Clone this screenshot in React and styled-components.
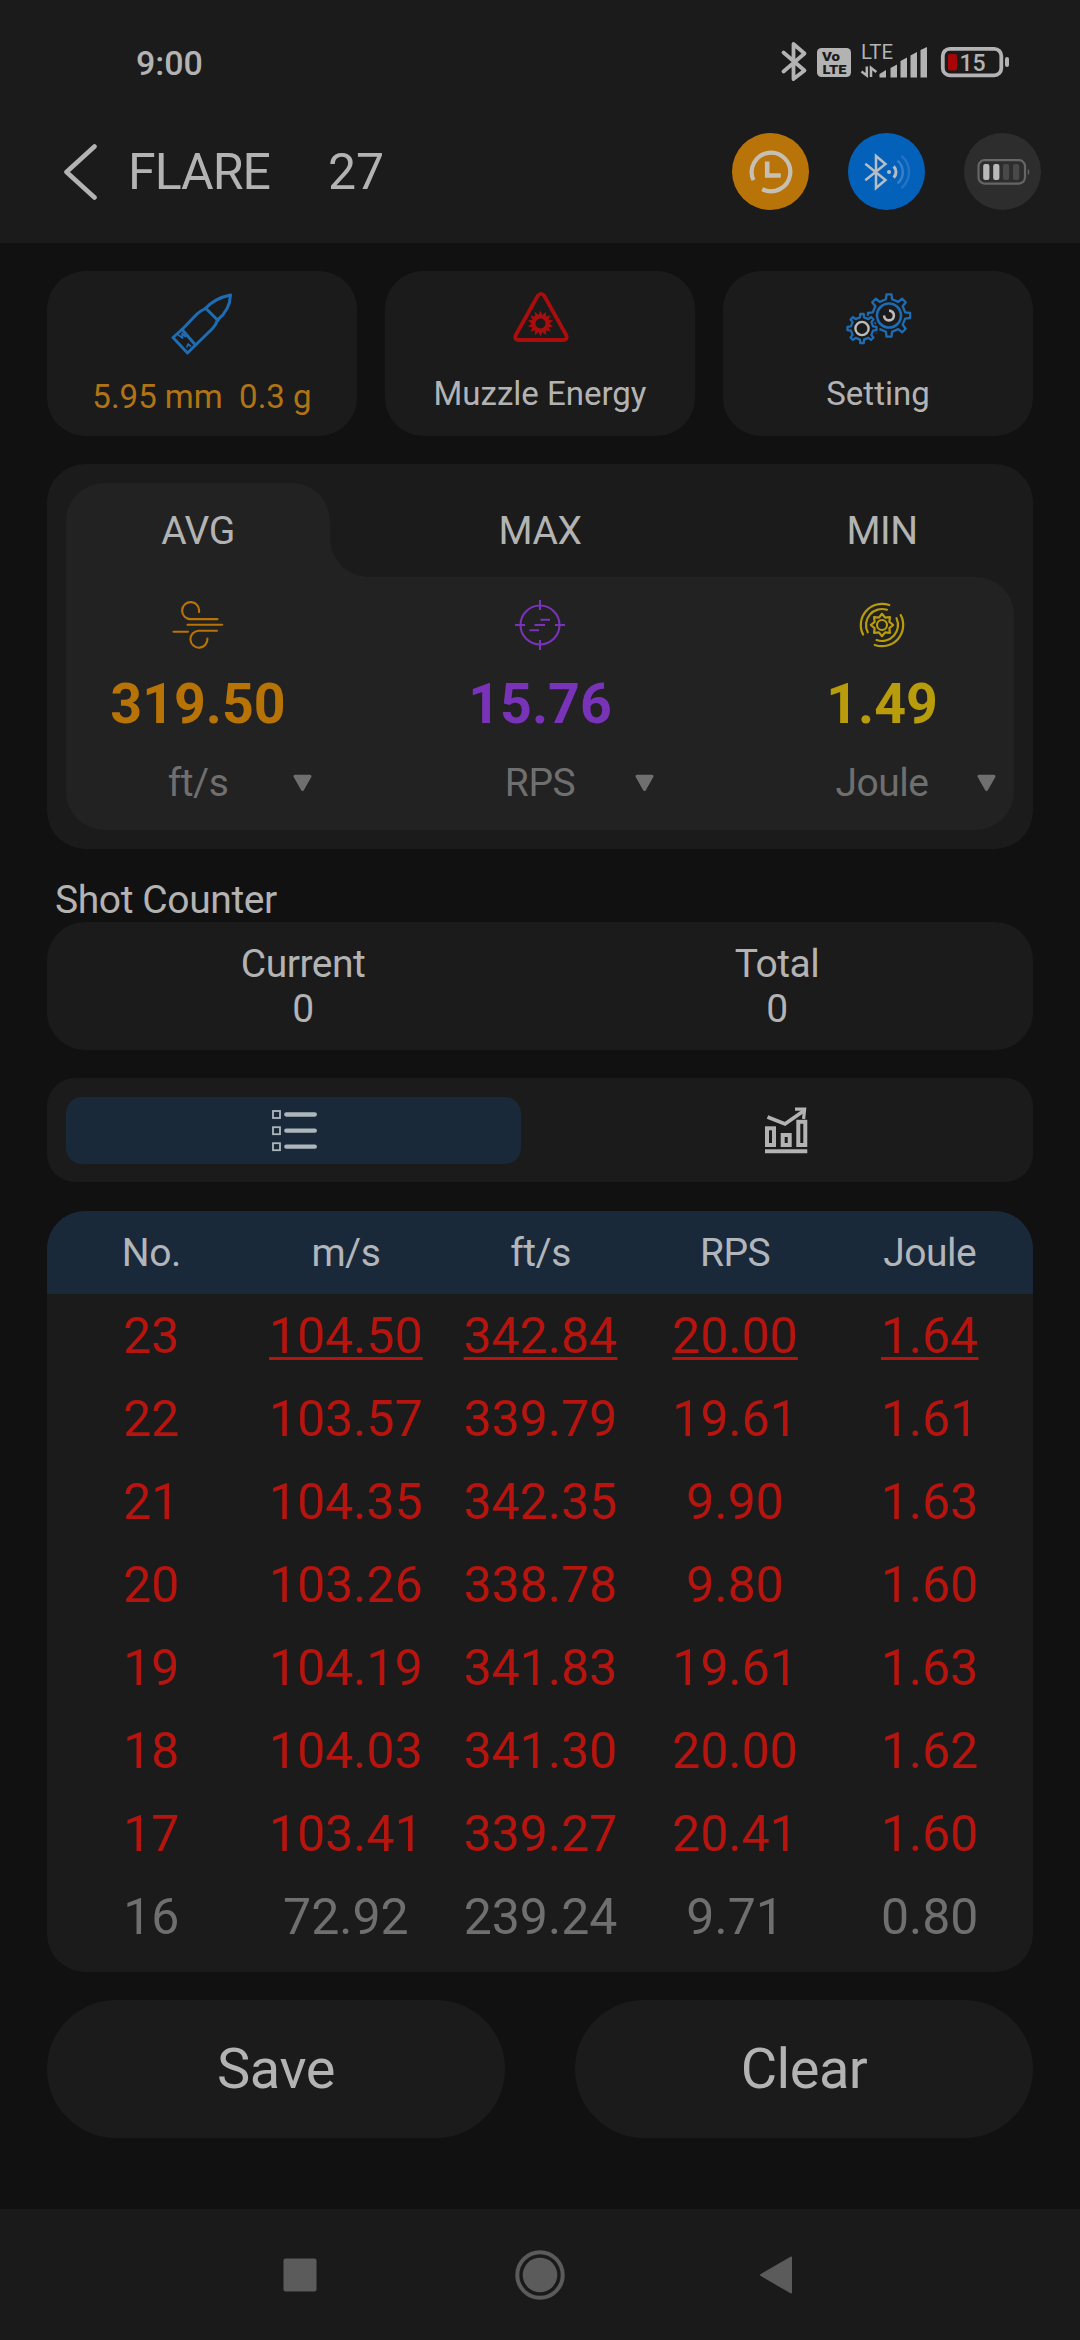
import React from 'react';

import styled, { createGlobalStyle } from "styled-components";

const GlobalStyle = createGlobalStyle`
    * {
        box-sizing: border-box;
    }
    body {
        margin: 0;
        background: #111111;
        font-family: Roboto, "Liberation Sans", sans-serif;
        color: #b3b3b3;
    }
    svg {
        display: block;
        flex: none;
    }
`;

const Screen = styled.div`
    width: 1080px;
    height: 2340px;
    display: flex;
    flex-direction: column;
    overflow: hidden;
`;

const TopArea = styled.header`
    height: 243px;
    background: #1b1b1b;
`;

const StatusBar = styled.div`
    height: 124px;
    padding: 0 70px 0 136px;
    display: flex;
    align-items: center;
`;

const Clock = styled.span`
    font-size: 34px;
    font-weight: 500;
    line-height: 40px;
    margin-right: auto;
    padding-top: 2px;
`;

const Toolbar = styled.div`
    height: 95px;
    padding: 0 39px 0 64px;
    display: flex;
    align-items: center;
`;

const Title = styled.h1`
    margin: 0 0 0 ${props => props.$gap}px;
    font-size: 50px;
    font-weight: 400;
    line-height: 60px;
    letter-spacing: ${props => props.$tracking || 0}px;
`;

const RoundButtons = styled.div`
    display: flex;
    gap: 39px;
    margin-left: auto;
`;

const RoundButton = styled.div`
    width: 77px;
    height: 77px;
    border-radius: 50%;
    background: ${props => props.$bg};
    display: flex;
    align-items: center;
    justify-content: center;
`;

const Content = styled.main`
    flex: 1;
    padding: 28px 47px 0;
    display: flex;
    flex-direction: column;
`;

const CardRow = styled.div`
    display: grid;
    grid-template-columns: repeat(3, 1fr);
    gap: 28px;
`;

const Card = styled.div`
    height: 165px;
    padding-top: ${props => props.$top}px;
    border-radius: 38px;
    background: #1b1b1b;
    display: flex;
    flex-direction: column;
    align-items: center;
`;

const CardLabel = styled.span`
    margin-top: auto;
    margin-bottom: ${props => props.$bottom || 22}px;
    font-size: 33px;
    line-height: 40px;
    white-space: pre;
    color: ${props => props.$color || "#b3b3b3"};
`;

const StatsPanel = styled.section`
    height: 385px;
    margin-top: 28px;
    padding: 19px;
    border-radius: 38px;
    background: #1b1b1b;
`;

const Tabs = styled.div`
    display: flex;
    justify-content: space-between;
`;

const Tab = styled.div`
    position: relative;
    width: 264px;
    height: 94px;
    font-size: 39px;
    line-height: 96px;
    letter-spacing: -0.5px;
    text-align: center;
    border-radius: 38px 38px 0 0;
    background: ${props => (props.$active ? "#222222" : "none")};

    /* inverted corner that joins the tab to the body */
    &::after {
        content: "";
        display: ${props => (props.$active ? "block" : "none")};
        position: absolute;
        left: 100%;
        bottom: 0;
        width: 38px;
        height: 38px;
        background: radial-gradient(circle at 100% 0, transparent 37.5px, #222222 38px);
    }
`;

const StatsBody = styled.div`
    height: 253px;
    padding-top: 17px;
    border-radius: 0 38px 38px 38px;
    background: #222222;
    display: flex;
    justify-content: space-between;
`;

const Stat = styled.div`
    width: 264px;
    display: flex;
    flex-direction: column;
    align-items: center;
`;

const IconBox = styled.div`
    height: 61px;
    display: flex;
    align-items: center;
    justify-content: center;
`;

const StatValue = styled.div`
    margin-top: 18px;
    font-size: 55.5px;
    font-weight: 700;
    line-height: 64px;
    color: ${props => props.$color};
`;

const UnitSelect = styled.div`
    width: 100%;
    margin-top: 22px;
    display: grid;
    align-items: center;
    font-size: 39px;
    line-height: 48px;
    letter-spacing: -0.5px;
    color: #6f6f70;

    > * {
        grid-area: 1 / 1;
    }
    span {
        text-align: center;
    }
    svg {
        justify-self: end;
        margin-right: 18px;
    }
`;

const SectionTitle = styled.h2`
    margin: 27px 0 0 8px;
    height: 46px;
    font-size: 39px;
    font-weight: 400;
    line-height: 49px;
    letter-spacing: -0.4px;
`;

const CounterPanel = styled.section`
    height: 128px;
    padding: 20px 19px 18px;
    border-radius: 38px;
    background: #1b1b1b;
    display: grid;
    grid-template-columns: 1fr 1fr;
    font-size: 39px;
    line-height: 45px;
    letter-spacing: -0.5px;
    text-align: center;
`;

const ViewSwitch = styled.div`
    height: 104px;
    margin-top: 28px;
    padding: 19px 19px 18px;
    border-radius: 28px;
    background: #1b1b1b;
    display: grid;
    grid-template-columns: 1fr 1fr;
    gap: 38px;
`;

const ViewButton = styled.div`
    border-radius: 16px;
    background: ${props => (props.$active ? "#1a293a" : "none")};
    display: flex;
    align-items: center;
    justify-content: center;
`;

const Table = styled.section`
    height: 761px;
    margin-top: 29px;
    border-radius: 38px;
    background: #1b1b1b;
    overflow: hidden;
`;

const TableRow = styled.div`
    height: 83px;
    padding: 0 6px 0 7px;
    display: grid;
    grid-template-columns: repeat(5, 1fr);
    text-align: center;
    font-size: 50px;
    line-height: 85px;
    color: ${props => (props.$muted ? "#6f6f70" : "#b6140f")};
`;

const TableHead = styled(TableRow)`
    font-size: 39px;
    letter-spacing: -0.5px;
    background: #1a293a;
    color: #b2b6bb;
`;

const Cell = styled.span`
    text-decoration: ${props => (props.$underline ? "underline" : "none")};
    text-decoration-thickness: 3px;
    text-underline-offset: 4px;
    text-decoration-skip-ink: none;
`;

const Actions = styled.div`
    margin-top: 28px;
    display: grid;
    grid-template-columns: 1fr 1fr;
    gap: 70px;
`;

const ActionButton = styled.button`
    height: 138px;
    padding: 0;
    border: 0;
    border-radius: 69px;
    background: #1b1b1b;
    color: #b3b3b3;
    font-family: inherit;
    font-size: 56px;
    line-height: 138px;
    letter-spacing: -0.5px;
`;

const NavBar = styled.nav`
    height: 131px;
    padding: 1px 287px 0 283px;
    background: #1a1a1a;
    display: flex;
    align-items: center;
    justify-content: space-between;
`;

const HomeIcon = styled.svg`
    margin-left: 4px;
`;

const GREY = "#b3b3b3";
const BLUE = "#1d6cb4";
const ORANGE = "#b87307";
const PURPLE = "#7833b8";
const YELLOW = "#b89c0c";

function polar(cx, cy, r, deg) {
    const a = (deg * Math.PI) / 180;
    return (cx + r * Math.cos(a)).toFixed(2) + " " + (cy + r * Math.sin(a)).toFixed(2);
}

// clockwise arc between two angles
function arc(cx, cy, r, from, to) {
    const large = to - from > 180 ? 1 : 0;
    return `M${polar(cx, cy, r, from)}A${r} ${r} 0 ${large} 1 ${polar(cx, cy, r, to)}`;
}

function star(cx, cy, outer, inner, points) {
    const list = [];
    for (let i = 0; i < points * 2; i++) {
        list.push(polar(cx, cy, i % 2 ? inner : outer, -90 + (i * 180) / points));
    }
    return "M" + list.join("L") + "Z";
}

function gear(cx, cy, outer, root, teeth) {
    const step = 360 / teeth;
    const list = [];
    for (let i = 0; i < teeth; i++) {
        const a = -90 + i * step;
        list.push(polar(cx, cy, root, a - step * 0.24));
        list.push(polar(cx, cy, outer, a - step * 0.15));
        list.push(polar(cx, cy, outer, a + step * 0.15));
        list.push(polar(cx, cy, root, a + step * 0.24));
    }
    return "M" + list.join("L") + "Z";
}

function StatusIcons() {
    return (
        <svg width="230" height="44" viewBox="780 40 230 44" fill={GREY} fontFamily="Roboto, sans-serif">
            <path d="M783.5 52.5L804.5 70.5L793.5 79V44L804.5 53.5L783.5 71.5" fill="none" stroke={GREY} strokeWidth="3.8" strokeLinejoin="round" strokeLinecap="round" />
            <rect x="817" y="48" width="34" height="29" rx="4.5" />
            <text x="822" y="60.8" fontSize="12.5" fontWeight="900" fill="#1b1b1b" textLength="18" lengthAdjust="spacingAndGlyphs">Vo</text>
            <text x="822.5" y="73.5" fontSize="12.8" fontWeight="900" fill="#1b1b1b" textLength="24" lengthAdjust="spacingAndGlyphs">LTE</text>
            <text x="861" y="59.3" fontSize="20" textLength="32" lengthAdjust="spacingAndGlyphs">LTE</text>
            <path d="M861.5 71.5L866.8 75.5V66.5M871 77V67.8L876.3 72" fill="none" stroke={GREY} strokeWidth="2.5" />
            <path d="M879.5 77.5V74L886 70V77.5ZM890.5 77.5V68L897 64.5V77.5ZM900.5 77.5V61L907 57.5V77.5ZM910.5 77.5V55.5L917 52V77.5ZM920.5 77.5V50L927 47V77.5Z" />
            <rect x="942.8" y="48.8" width="58.5" height="26.5" rx="7" fill="none" stroke={GREY} strokeWidth="3.8" />
            <rect x="1005" y="57" width="4" height="10" rx="2" />
            <rect x="948" y="54" width="9" height="16.5" rx="2" fill="#a80606" />
            <text x="959.5" y="71" fontSize="23" fontWeight="500" textLength="26">15</text>
        </svg>
    );
}

function BackIcon() {
    return (
        <svg width="34" height="56" viewBox="0 0 34 56" fill="none" stroke={GREY} strokeWidth="4.6" strokeLinecap="round" strokeLinejoin="round">
            <path d="M30.5 2.5L2.5 28L30.5 53.5" />
        </svg>
    );
}

function TimerIcon() {
    return (
        <svg width="50" height="50" viewBox="-25 -25 50 50" fill="none" stroke="#c6c0b4" strokeWidth="4.2">
            <path d={arc(0, 0, 19.3, 155, 477)} />
            <path d="M-3.8 -10.5V3.5H9.8" strokeWidth="4.6" />
        </svg>
    );
}

function BluetoothIcon() {
    return (
        <svg width="56" height="50" viewBox="-28 -25 56 50" fill="none" stroke="#b7bdc4" strokeWidth="2.5">
            <path d="M-21.7 -8.3L-1.5 8L-11 16V-16L-1.5 -8L-21.7 8.3" />
            <circle cx="2" cy="0" r="2" fill="#b7bdc4" stroke="none" />
            <path d={arc(1, 0, 8, -45, 45)} strokeWidth="3" />
            <path d={arc(1, 0, 14.8, -50, 50)} stroke="#3580c8" />
            <path d={arc(1, 0, 21, -50, 50)} stroke="#2573c4" />
        </svg>
    );
}

function BatteryIcon() {
    return (
        <svg width="56" height="50" viewBox="-28 -25 56 50">
            <rect x="-24.5" y="-11.8" width="46.5" height="23.4" rx="6" fill="none" stroke="#666666" strokeWidth="2.2" />
            <path d="M24.8 -3.5Q27.8 0 24.8 3.5Z" fill="#666666" />
            <rect x="-19.8" y="-8" width="6.2" height="16" rx="2" fill="#b9b9b9" />
            <rect x="-9.8" y="-8" width="6.2" height="16" rx="2" fill="#b9b9b9" />
            <rect x="0" y="-8" width="6.2" height="16" rx="2" fill="#494949" />
            <rect x="10" y="-8" width="6.2" height="16" rx="2" fill="#494949" />
        </svg>
    );
}

function BulletIcon() {
    return (
        <svg width="62" height="62" viewBox="0 0 62 62" fill="none" stroke={BLUE} strokeWidth="3" strokeLinejoin="round" strokeLinecap="round">
            <path d="M2 44.5L11.5 36L26 21Q29 18 34.5 15.5Q44 5 59.5 2Q59 17 46.5 27Q45 32 41.5 35.5L16.5 60Z" />
            <path d="M34.5 15L47 27.5M11 36.5L24 51.5" />
            <path d="M7.5 42L11.5 45L11 40.5L14.5 43.5M16 54L17 51L19.5 53" strokeWidth="1.7" />
        </svg>
    );
}

function MuzzleIcon() {
    return (
        <svg width="58" height="50" viewBox="-2 0 58 50">
            <path d="M24.8 3.8Q28 0 31.2 3.8L53.3 43.2Q54.8 48 50 48H6Q1.2 48 2.7 43.2Z" fill="none" stroke="#a90d0d" strokeWidth="3.8" strokeLinejoin="round" />
            <path d={star(27.5, 31.5, 13, 8.8, 14) + "M32.5 31.5A5 5 0 1 0 22.5 31.5A5 5 0 1 0 32.5 31.5Z"} fill="#a90d0d" fillRule="evenodd" />
        </svg>
    );
}

function GearsIcon() {
    return (
        <svg width="67" height="52" viewBox="0 0 67 52" fill="none" stroke={BLUE} strokeWidth="2.3" strokeLinejoin="round">
            <path d={gear(44, 22.5, 21.3, 16.5, 8)} />
            <circle cx="44" cy="22.5" r="12" strokeWidth="2.6" />
            <path d={arc(44, 22.5, 4.9, -90, 180)} stroke="#bcbcbc" strokeWidth="2.6" />
            <path d={gear(17, 35.5, 15, 11.3, 8)} fill="#1b1b1b" stroke="#1b1b1b" strokeWidth="5" />
            <path d={gear(17, 35.5, 14.6, 11.3, 8)} />
            <circle cx="17" cy="35.5" r="6.6" stroke="#bcbcbc" strokeWidth="2.4" />
        </svg>
    );
}

function WindIcon() {
    return (
        <svg width="52" height="48" viewBox="0 0 52 48" fill="none" stroke={ORANGE} strokeWidth="2.1" strokeLinecap="round">
            <path d="M27 11A8.5 8.5 0 1 0 19 18.1H45.5" />
            <path d="M15.5 23.7H50.2" />
            <path d="M1.5 30.7H16" />
            <path d="M45 29.7H26.5A8.5 8.5 0 1 0 35.4 37.5" />
        </svg>
    );
}

function TargetIcon() {
    return (
        <svg width="52" height="52" viewBox="0 0 52 52" fill="none" stroke={PURPLE} strokeWidth="2.1">
            <circle cx="26" cy="26" r="19.5" />
            <path d="M26 1V11M26 41V51M1 26H11M41 26H51" />
            <path d="M15.5 31.3H25M20.5 26H31M26.5 20.7H36" />
        </svg>
    );
}

function EnergyIcon() {
    return (
        <svg width="50" height="50" viewBox="-25 -25 50 50" fill="none" stroke={YELLOW} strokeWidth="2.2" strokeLinecap="round" strokeLinejoin="round">
            <path d={arc(0, 0, 21.2, 153, 290)} />
            <path d={arc(0, 0, 16, 153, 288)} />
            <path d={arc(0, 0, 21.2, -28, 110)} />
            <path d={arc(0, 0, 16, -25, 110)} />
            <path d={star(0, 0, 11.2, 8, 8)} />
            <circle cx="0" cy="0" r="5" />
        </svg>
    );
}

function ArrowDown() {
    return (
        <svg width="19" height="18" viewBox="0 0 19 18" fill="#6f6f70" stroke="#6f6f70" strokeWidth="3" strokeLinejoin="round">
            <path d="M2 2.2H17L9.5 15.5Z" />
        </svg>
    );
}

function ListIcon() {
    return (
        <svg width="47" height="42" viewBox="-2 0 47 42" fill="none" stroke="#aeb6bd">
            {[4.5, 20.7, 36.7].map(y => (
                <g key={y}>
                    <rect x="1" y={y - 3.5} width="7" height="7" strokeWidth="1.8" />
                    <path d={`M14.3 ${y}H42.8`} strokeWidth="4.3" strokeLinecap="round" />
                </g>
            ))}
        </svg>
    );
}

function ChartIcon() {
    return (
        <svg width="43" height="47" viewBox="0 0 43 47" fill="none" stroke={GREY} strokeWidth="4">
            <rect x="2" y="21.3" width="7" height="16.7" />
            <rect x="17.7" y="28" width="7" height="10" />
            <rect x="33.3" y="14.8" width="7" height="23.2" />
            <path d="M0 44.3H42.3" />
            <path d="M2.5 10L20 17L38.5 4" strokeWidth="3.7" />
            <path d="M30 2.2H39.6L38.6 12" strokeWidth="3.2" />
        </svg>
    );
}

const stats = [
    { id: "avg", icon: <WindIcon />, value: "319.50", unit: "ft/s", color: ORANGE },
    { id: "max", icon: <TargetIcon />, value: "15.76", unit: "RPS", color: PURPLE },
    { id: "min", icon: <EnergyIcon />, value: "1.49", unit: "Joule", color: YELLOW },
];

const columns = ["No.", "m/s", "ft/s", "RPS", "Joule"];

const shots = [
    ["23", "104.50", "342.84", "20.00", "1.64"],
    ["22", "103.57", "339.79", "19.61", "1.61"],
    ["21", "104.35", "342.35", "9.90", "1.63"],
    ["20", "103.26", "338.78", "9.80", "1.60"],
    ["19", "104.19", "341.83", "19.61", "1.63"],
    ["18", "104.03", "341.30", "20.00", "1.62"],
    ["17", "103.41", "339.27", "20.41", "1.60"],
    ["16", "72.92", "239.24", "9.71", "0.80"],
];

export default function App() {
    return (
        <>
            <GlobalStyle />
            <Screen>
                <TopArea>
                    <StatusBar>
                        <Clock>9:00</Clock>
                        <StatusIcons />
                    </StatusBar>
                    <Toolbar>
                        <BackIcon />
                        <Title $gap={30} $tracking={-1}>FLARE</Title>
                        <Title $gap={58}>27</Title>
                        <RoundButtons>
                            <RoundButton $bg="#b87408"><TimerIcon /></RoundButton>
                            <RoundButton $bg="#0461ba"><BluetoothIcon /></RoundButton>
                            <RoundButton $bg="#2d2d2d"><BatteryIcon /></RoundButton>
                        </RoundButtons>
                    </Toolbar>
                </TopArea>

                <Content>
                    <CardRow>
                        <Card $top={22}>
                            <BulletIcon />
                            <CardLabel $color="#b07416" $bottom={19}>5.95 mm  0.3 g</CardLabel>
                        </Card>
                        <Card $top={21}>
                            <MuzzleIcon />
                            <CardLabel>Muzzle Energy</CardLabel>
                        </Card>
                        <Card $top={22}>
                            <GearsIcon />
                            <CardLabel>Setting</CardLabel>
                        </Card>
                    </CardRow>

                    <StatsPanel>
                        <Tabs>
                            <Tab $active>AVG</Tab>
                            <Tab>MAX</Tab>
                            <Tab>MIN</Tab>
                        </Tabs>
                        <StatsBody>
                            {stats.map(item => (
                                <Stat key={item.id}>
                                    <IconBox>{item.icon}</IconBox>
                                    <StatValue $color={item.color}>{item.value}</StatValue>
                                    <UnitSelect>
                                        <span>{item.unit}</span>
                                        <ArrowDown />
                                    </UnitSelect>
                                </Stat>
                            ))}
                        </StatsBody>
                    </StatsPanel>

                    <SectionTitle>Shot Counter</SectionTitle>
                    <CounterPanel>
                        <div>Current</div>
                        <div>Total</div>
                        <div>0</div>
                        <div>0</div>
                    </CounterPanel>

                    <ViewSwitch>
                        <ViewButton $active><ListIcon /></ViewButton>
                        <ViewButton><ChartIcon /></ViewButton>
                    </ViewSwitch>

                    <Table>
                        <TableHead>
                            {columns.map(name => <Cell key={name}>{name}</Cell>)}
                        </TableHead>
                        {shots.map((shot, row) => (
                            <TableRow key={shot[0]} $muted={shot[0] === "16"}>
                                {shot.map((value, col) => (
                                    <Cell key={col} $underline={row === 0 && col > 0}>{value}</Cell>
                                ))}
                            </TableRow>
                        ))}
                    </Table>

                    <Actions>
                        <ActionButton>Save</ActionButton>
                        <ActionButton>Clear</ActionButton>
                    </Actions>
                </Content>

                <NavBar>
                    <svg width="34" height="34" viewBox="0 0 34 34" fill="#5b5b5b">
                        <rect x="0.5" y="0.5" width="33" height="33" rx="2" />
                    </svg>
                    <HomeIcon width="50" height="50" viewBox="0 0 50 50" fill="#5b5b5b">
                        <circle cx="25" cy="25" r="22.7" fill="none" stroke="#5b5b5b" strokeWidth="4" />
                        <circle cx="25" cy="25" r="17.3" />
                    </HomeIcon>
                    <svg width="34" height="38" viewBox="0 0 34 38" fill="#5b5b5b" stroke="#5b5b5b" strokeWidth="2" strokeLinejoin="round">
                        <path d="M32 1.5V36.5L2 19Z" />
                    </svg>
                </NavBar>
            </Screen>
        </>
    );
}
